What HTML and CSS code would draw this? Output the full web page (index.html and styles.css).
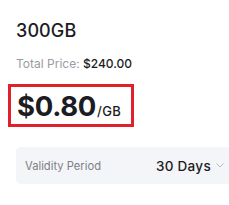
FILE: index.html
```html
<!DOCTYPE html>
<html>
<head>
<meta charset="utf-8">
<link rel="stylesheet" href="styles.css">
</head>
<body>
<div class="card">
  <div class="title">300GB</div>
  <div class="total"><span class="label">Total Price:</span> <span class="amount">$240.00</span></div>
  <div class="price-box"><span class="price">$0.80</span><span class="unit">/GB</span></div>
  <div class="validity">
    <span class="vlabel">Validity Period</span>
    <span class="vvalue">30 Days</span>
    <svg class="chev" width="8" height="5" viewBox="0 0 8 5"><path d="M0.5 0.5 L4 4 L7.5 0.5" fill="none" stroke="#b8bcc4" stroke-width="1"/></svg>
  </div>
</div>
</body>
</html>
```
FILE: styles.css
```css
html, body { margin: 0; padding: 0; background: #fff; }
body { width: 229px; height: 205px; overflow: hidden; font-family: Inter, "Noto Sans", sans-serif; color: #1c1c22; }
.card { padding: 21px 0 0 16px; }
.title { font-size: 18px; font-weight: 500; line-height: 20px; letter-spacing: 0.1px; }
.total { margin-top: 16px; font-size: 12px; line-height: 14px; }
.label { color: #9a9ca2; }
.amount { color: #1c1c22; font-weight: 500; }
.price-box { margin: 13px 0 0 -8px; width: 114px; height: 37px; border: 3px solid #e0202a; display: flex; align-items: baseline; padding: 0 0 0 6px; box-sizing: content-box; }
.price { font-size: 27.5px; font-weight: 700; line-height: 38px; letter-spacing: -0.3px; }
.unit { font-size: 13px; font-weight: 500; margin-left: 1px; letter-spacing: 0.3px; }
.validity { margin-top: 20px; height: 37px; background: #f4f5f8; border-radius: 5px 0 0 5px; display: flex; align-items: center; padding: 0 5px 0 9px; }
.vlabel { font-size: 11.2px; color: #7d8087; flex: 1; }
.vvalue { font-size: 13.5px; color: #1c1c22; font-weight: 500; letter-spacing: 0.3px; }
.chev { margin-left: 5px; width: 8px; flex: none; }
```
